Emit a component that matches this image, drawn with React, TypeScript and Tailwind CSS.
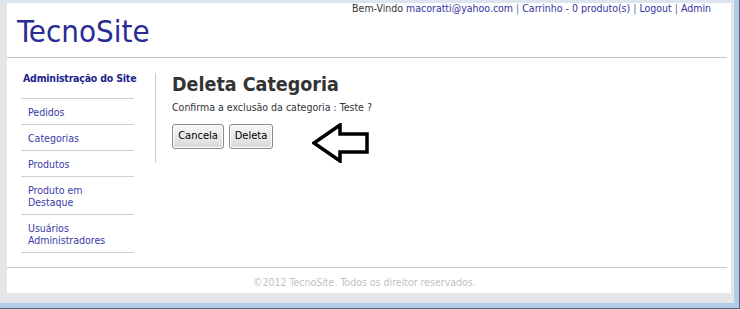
const menu = [
  { label: "Pedidos" },
  { label: "Categorias" },
  { label: "Produtos" },
  { label: "Produto em Destaque", lines: ["Produto em", "Destaque"] },
  { label: "Usuários Administradores", lines: ["Usuários", "Administradores"] },
];

function Arrow() {
  return (
    <svg width="58" height="40" viewBox="0 0 58 40" className="-mt-[1px] ml-[39px] shrink-0">
      <polygon
        points="2,20 28,2 28,11 55,11 55,29 28,29 28,38"
        fill="none"
        stroke="#000"
        strokeWidth="3.5"
        strokeLinejoin="miter"
      />
    </svg>
  );
}

export default function App() {
  return (
    <div className="h-[309px] w-[740px] overflow-hidden border-b border-r border-[#56667c] bg-[#b4cbe8] pb-[5px] pr-[5px] font-[Tahoma,'DejaVu_Sans_Condensed','DejaVu_Sans',sans-serif]">
      <div className="h-full border-t-[3px] border-[#dbe4ef] bg-[#e4e6e9] pb-[10px] pl-[7px] pr-[3px]">
        <div className="flex h-full flex-col bg-white">
          {/* header */}
          <header className="mr-[4px] border-b border-[#c4c4c4] pb-[9px]">
            <div className="flex justify-end whitespace-nowrap pr-[16px] text-[10.5px] leading-[11px] text-[#333]">
              <span>Bem-Vindo</span>
              <span className="ml-[3px] text-[#3434a3]">macoratti@yahoo.com</span>
              <span className="mx-[3px] text-[#6a6a9a]">|</span>
              <span className="text-[#3434a3]">Carrinho - 0 produto(s)</span>
              <span className="mx-[3px] text-[#6a6a9a]">|</span>
              <span className="text-[#3434a3]">Logout</span>
              <span className="mx-[3px] text-[#6a6a9a]">|</span>
              <span className="text-[#3434a3]">Admin</span>
            </div>
            <h1 className="pl-[10px] text-[31px] leading-[34px] text-[#2b2b94]">TecnoSite</h1>
          </header>

          {/* body */}
          <div className="mr-[4px] flex border-b border-[#cbc4cf] pb-[14px] pl-[14px]">
            <nav className="w-[113px] shrink-0 pt-[14px]">
              <div className="whitespace-nowrap border-b border-[#cfcfcf] pb-[13px] pl-[2px] text-[10.5px] font-bold leading-[13px] tracking-[-0.2px] text-[#23238c]">
                Administração do Site
              </div>
              <ul>
                {menu.map((item) => (
                  <li
                    key={item.label}
                    className="border-b border-[#d3cdd3] pb-[6px] pl-[7px] pt-[7px] text-[10.5px] leading-[12px] text-[#3a3aa8]"
                  >
                    {item.lines ? (
                      item.lines.map((l) => <div key={l}>{l}</div>)
                    ) : (
                      <div>{item.label}</div>
                    )}
                  </li>
                ))}
              </ul>
            </nav>

            <main className="ml-[21px] mt-[15px] self-start border-l border-[#cccccc] pl-[16px]">
              <h2 className="text-[19.5px] font-bold leading-[24px] text-[#333]">Deleta Categoria</h2>
              <p className="mt-[4px] text-[10.5px] leading-[13px] text-[#333]">
                Confirma a exclusão da categoria : Teste ?
              </p>
              <div className="mt-[10px] flex items-start">
                <button className="h-[25px] w-[52px] rounded-[3px] border border-[#8a8a8a] bg-linear-to-b from-[#f7f7f7] to-[#d9d9d9] text-[11px] text-black shadow-[inset_0_0_0_1px_#ffffff]">
                  Cancela
                </button>
                <button className="ml-[5px] h-[25px] w-[44px] rounded-[3px] border border-[#8a8a8a] bg-linear-to-b from-[#f7f7f7] to-[#d9d9d9] text-[11px] text-black shadow-[inset_0_0_0_1px_#ffffff]">
                  Deleta
                </button>
                <Arrow />
              </div>
            </main>
          </div>

          {/* footer */}
          <footer className="pl-[246px] pt-[8px] text-[10.5px] leading-[13px] text-[#c2c2c2]">
            ©2012 TecnoSite. Todos os direitor reservados.
          </footer>
        </div>
      </div>
    </div>
  );
}
